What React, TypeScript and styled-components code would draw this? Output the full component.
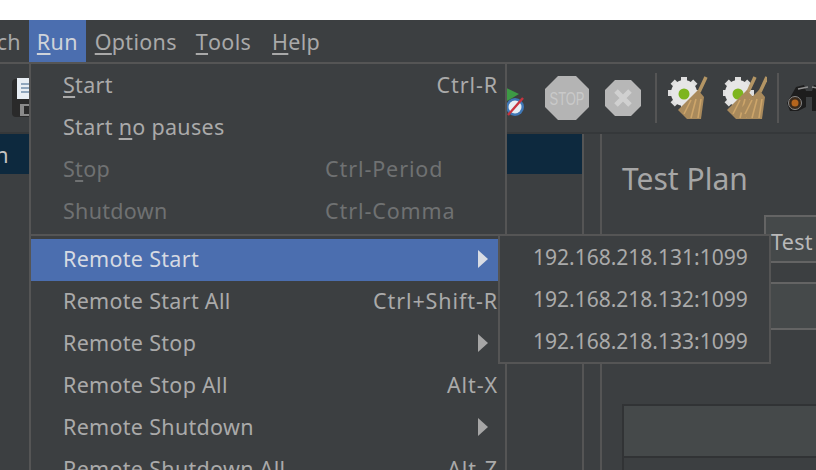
import React from 'react';
import styled, {createGlobalStyle} from 'styled-components';

const GlobalStyle = createGlobalStyle`
  html, body {
    margin: 0;
    padding: 0;
    background: #fff;
  }
`;

const Page = styled.div`
  position: relative;
  width: 816px;
  height: 470px;
  overflow: hidden;
  display: flex;
  flex-direction: column;
  background: #3c3f41;
  font-family: "Noto Sans", "Liberation Sans", sans-serif;
  font-size: 21.5px;
  letter-spacing: 0.3px;
  color: #b4b4b4;
`;

const TitleStrip = styled.div`
  height: 20px;
  flex: none;
  background: #fff;
`;

const MenuBar = styled.div`
  height: 42px;
  flex: none;
  display: flex;
  border-bottom: 2px solid #555555;
`;

const BarItem = styled.div<{$active?: boolean; $offset?: number}>`
  display: flex;
  align-items: center;
  padding: 0 8px;
  margin-left: ${(p) => p.$offset ?? 0}px;
  background: ${(p) => (p.$active ? '#4b6eaf' : 'transparent')};
  color: ${(p) => (p.$active ? '#cfd3da' : '#a9a9a9')};
`;

const Mnemonic = styled.span`
  text-decoration: underline;
  text-underline-offset: 3px;
  text-decoration-thickness: 2px;
`;

const ToolBar = styled.div`
  height: 68px;
  flex: none;
  display: flex;
  align-items: center;
  padding-left: 12px;
  border-bottom: 2px solid #35383a;
`;

const ToolIcon = styled.svg<{$gap?: number}>`
  flex: none;
  display: block;
  margin-left: ${(p) => p.$gap ?? 0}px;
`;

const ToolSeparator = styled.div<{$gap: number}>`
  flex: none;
  width: 2px;
  height: 50px;
  margin-left: ${(p) => p.$gap}px;
  background: #555555;
`;

const Body = styled.div`
  flex: 1;
  display: flex;
  min-height: 0;
`;

const TreePane = styled.div`
  width: 582px;
  flex: none;
  overflow: hidden;
`;

const TreeRow = styled.div`
  height: 40px;
  display: flex;
  align-items: center;
  background: #0d293e;
  white-space: nowrap;
  color: #c4c4c4;
`;

const TreeLabel = styled.span`
  margin-left: -84px;
`;

const Divider = styled.div`
  flex: none;
  width: 16px;
  border-left: 2px solid #555555;
  border-right: 2px solid #555555;
`;

const EditorPane = styled.div`
  flex: 1;
  min-width: 0;
  padding: 0 0 0 20px;
  overflow: hidden;
`;

const PlanTitle = styled.div`
  height: 82px;
  padding-top: 27px;
  box-sizing: border-box;
  font-size: 30px;
  line-height: 36px;
  letter-spacing: 0;
  color: #a6a6a6;
`;

const FieldRow = styled.div`
  display: flex;
  align-items: center;
  height: 46px;
  margin-bottom: 20px;
`;

const FieldLabel = styled.div`
  width: 142px;
  flex: none;
  padding-top: 8px;
`;

const Field = styled.div`
  flex: 1;
  height: 44px;
  line-height: 50px;
  padding-left: 5px;
  background: #45494a;
  border: 2px solid #646464;
  border-right: 0;
  white-space: nowrap;
  color: #b9b9b9;
`;

const CommentField = styled(Field)`
  margin-left: 142px;
`;

const VarTable = styled.div`
  margin-top: 74px;
  border-left: 2px solid #313335;
  height: 80px;
`;

const VarHeader = styled.div`
  height: 50px;
  background: #45494a;
  border-top: 2px solid #313335;
  border-bottom: 2px solid #313335;
`;

const Menu = styled.div`
  position: absolute;
  left: 29px;
  top: 62px;
  width: 478px;
  height: 440px;
  box-sizing: border-box;
  padding-top: 1px;
  background: #3c3f41;
  border: 2px solid #555555;
`;

const MenuRow = styled.div<{$active?: boolean; $disabled?: boolean}>`
  height: 42px;
  box-sizing: border-box;
  display: flex;
  align-items: center;
  justify-content: space-between;
  padding: 0 7px 4px 32px;
  white-space: nowrap;
  background: ${(p) => (p.$active ? '#4b6eaf' : 'transparent')};
  color: ${(p) => (p.$disabled ? '#6f7172' : p.$active ? '#d6dae2' : '#aaaaaa')};
`;

const Shortcut = styled.span<{$col?: number}>`
  letter-spacing: 0.9px;
  ${(p) => (p.$col ? `width: ${p.$col}px;` : '')}
`;

const Arrow = styled.span<{$active?: boolean}>`
  width: 0;
  height: 0;
  margin: 2px 10px 0 0;
  border-top: 9px solid transparent;
  border-bottom: 9px solid transparent;
  border-left: 10px solid ${(p) => (p.$active ? '#d8dce4' : '#a6a6a6')};
`;

const MenuRule = styled.div`
  height: 5px;
  box-sizing: border-box;
  border-top: 2px solid #555555;
  margin-top: 1px;
`;

const SubMenu = styled.div`
  position: absolute;
  left: 498px;
  top: 234px;
  width: 273px;
  box-sizing: border-box;
  background: #3c3f41;
  border: 2px solid #555555;
`;

const SubRow = styled.div`
  height: 42px;
  display: flex;
  align-items: center;
  padding-left: 33px;
  font-size: 21px;
  letter-spacing: 0;
  color: #aaaaaa;
`;

const SaveIcon = () => (
  <ToolIcon width={40} height={40} viewBox="0 0 40 40">
    <rect x="0" y="1" width="36" height="38" rx="4" fill="#2a2a2a" />
    <rect x="5" y="0" width="24" height="21" fill="#e8eef4" />
    <path d="M9 6h16M9 10h16M9 14h16" stroke="#8fa6bd" strokeWidth="2" />
    <rect x="8" y="26" width="20" height="12" fill="#8a8a8a" />
    <rect x="12" y="28" width="6" height="8" fill="#2a2a2a" />
  </ToolIcon>
);

const NoTimerIcon = () => (
  <ToolIcon $gap={430} width={44} height={44} viewBox="0 0 44 44">
    <path d="M8 4 L37 18 L25 25 Z" fill="#3d9a45" />
    <circle cx="33" cy="31" r="9" fill="#3f77b5" />
    <circle cx="33" cy="31" r="6.5" fill="#e6edf3" />
    <path d="M26 39 L41 22" stroke="#c8343f" strokeWidth="2.4" />
  </ToolIcon>
);

const StopIcon = () => (
  <ToolIcon $gap={19} width={44} height={44} viewBox="0 0 44 44">
    <path d="M13 0h18l13 13v18L31 44H13L0 31V13z" fill="#b4b4b4" />
    <text x="22" y="29" textAnchor="middle" textLength="35" lengthAdjust="spacingAndGlyphs" fontFamily="Liberation Sans" fontSize="19" letterSpacing="0" fill="#c9c9c9">STOP</text>
  </ToolIcon>
);

const ShutdownIcon = () => (
  <ToolIcon $gap={16} width={36} height={36} viewBox="0 0 36 36">
    <path d="M10 0h16l10 10v16L26 36H10L0 26V10z" fill="#b7b7b7" />
    <path d="M11 11l14 14M25 11L11 25" stroke="#d0d0d0" strokeWidth="5" />
  </ToolIcon>
);

const Gear = ({cx}: {cx: number}) => (
  <g>
    <g fill="#dedede">
      {[0, 45, 90, 135].map((a) => (
        <rect key={a} x={cx - 16} y={14} width={32} height={6} transform={`rotate(${a} ${cx} 17)`} />
      ))}
    </g>
    <circle cx={cx} cy={17} r={13} fill="#e6e6e6" />
    <circle cx={cx} cy={18} r={5.5} fill="#7db51f" />
  </g>
);

const Broom = ({dx}: {dx: number}) => (
  <g transform={`translate(${dx} 0)`}>
    <path d="M39 1 L32 16" stroke="#b39564" strokeWidth="3.5" />
    <path d="M31 14 L37 21 L34 43 L20 43 L11 34 Z" fill="#a98a5c" />
    <path d="M24 24 L17 38M29 23 L24 42M34 23 L31 42" stroke="#cda56a" strokeWidth="1.6" />
  </g>
);

const CleanIcon = () => (
  <ToolIcon $gap={10} width={42} height={44} viewBox="0 0 42 44">
    <Gear cx={17} />
    <Broom dx={0} />
  </ToolIcon>
);

const CleanAllIcon = () => (
  <ToolIcon $gap={14} width={44} height={44} viewBox="0 0 44 44">
    <Gear cx={15} />
    <Broom dx={-7} />
    <Broom dx={5} />
  </ToolIcon>
);

const BinocularsIcon = () => (
  <ToolIcon $gap={7} width={44} height={30} viewBox="0 0 44 30">
    <path d="M1 20 L10 4 L18 2 L20 8 H26 L28 2 L36 4 L44 20 V28 H26 V14 H20 V24 L12 28 H4 Z" fill="#1d1d1d" />
    <circle cx="9" cy="20" r="6.5" fill="#3a2a1c" stroke="#8a8a8a" strokeWidth="1" />
    <circle cx="9" cy="20" r="3.5" fill="#b5651d" />
    <path d="M12 6 L22 4M26 4 L36 6" stroke="#8f8f8f" strokeWidth="1.5" />
  </ToolIcon>
);

const App = () => {
  return (
    <Page>
      <GlobalStyle />
      <TitleStrip />
      <MenuBar>
        <BarItem $offset={-57}>Search</BarItem>
        <BarItem $active><Mnemonic>R</Mnemonic>un</BarItem>
        <BarItem $offset={1}><Mnemonic>O</Mnemonic>ptions</BarItem>
        <BarItem $offset={3}><Mnemonic>T</Mnemonic>ools</BarItem>
        <BarItem $offset={5}><Mnemonic>H</Mnemonic>elp</BarItem>
      </MenuBar>
      <ToolBar>
        <SaveIcon />
        <NoTimerIcon />
        <StopIcon />
        <ShutdownIcon />
        <ToolSeparator $gap={14} />
        <CleanIcon />
        <CleanAllIcon />
        <ToolSeparator $gap={10} />
        <BinocularsIcon />
      </ToolBar>
      <Body>
        <TreePane>
          <TreeRow><TreeLabel>Test Plan</TreeLabel></TreeRow>
        </TreePane>
        <Divider />
        <EditorPane>
          <PlanTitle>Test Plan</PlanTitle>
          <FieldRow>
            <FieldLabel>Name:</FieldLabel>
            <Field>Test Plan</Field>
          </FieldRow>
          <CommentField />
          <VarTable>
            <VarHeader />
          </VarTable>
        </EditorPane>
      </Body>
      <Menu>
        <MenuRow><span><Mnemonic>S</Mnemonic>tart</span><Shortcut>Ctrl-R</Shortcut></MenuRow>
        <MenuRow><span>Start <Mnemonic>n</Mnemonic>o pauses</span></MenuRow>
        <MenuRow $disabled><span>S<Mnemonic>t</Mnemonic>op</span><Shortcut $col={173}>Ctrl-Period</Shortcut></MenuRow>
        <MenuRow $disabled><span>Shutdown</span><Shortcut $col={173}>Ctrl-Comma</Shortcut></MenuRow>
        <MenuRule />
        <MenuRow $active><span>Remote Start</span><Arrow $active /></MenuRow>
        <MenuRow><span>Remote Start All</span><Shortcut>Ctrl+Shift-R</Shortcut></MenuRow>
        <MenuRow><span>Remote Stop</span><Arrow /></MenuRow>
        <MenuRow><span>Remote Stop All</span><Shortcut>Alt-X</Shortcut></MenuRow>
        <MenuRow><span>Remote Shutdown</span><Arrow /></MenuRow>
        <MenuRow><span>Remote Shutdown All</span><Shortcut>Alt-Z</Shortcut></MenuRow>
      </Menu>
      <SubMenu>
        <SubRow>192.168.218.131:1099</SubRow>
        <SubRow>192.168.218.132:1099</SubRow>
        <SubRow>192.168.218.133:1099</SubRow>
      </SubMenu>
    </Page>
  );
};

export default App;
